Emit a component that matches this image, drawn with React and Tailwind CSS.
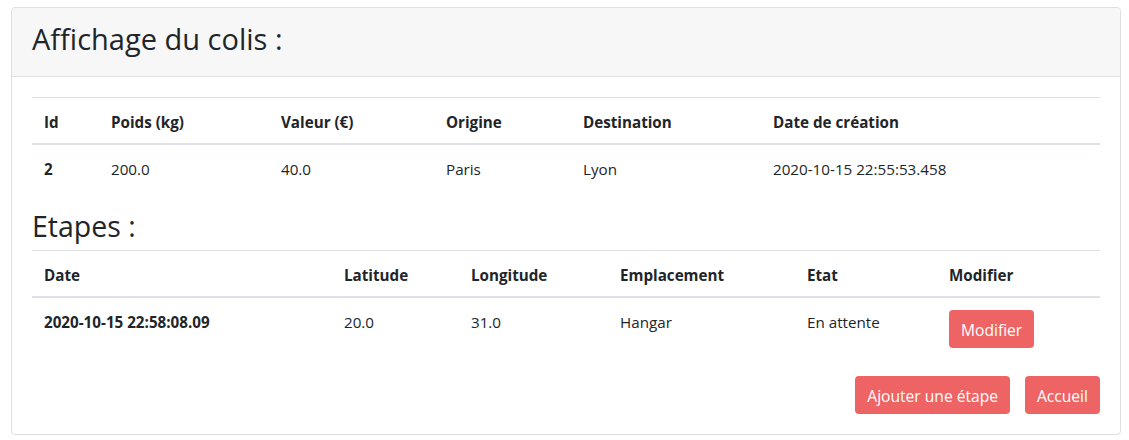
const colis = {
  id: "2",
  poids: "200.0",
  valeur: "40.0",
  origine: "Paris",
  destination: "Lyon",
  date: "2020-10-15 22:55:53.458",
};

const etapes = [
  {
    date: "2020-10-15 22:58:08.09",
    latitude: "20.0",
    longitude: "31.0",
    emplacement: "Hangar",
    etat: "En attente",
  },
];

const th = "px-3 pt-[14px] pb-[10px] text-left font-bold align-bottom border-b-2 border-[#dee2e6] leading-[21px]";
const td = "px-3 pt-[14px] pb-[10px] align-top leading-[21px]";
const btn = "bg-[#ee6464] text-white rounded-[4px] px-3 h-[38px] pt-[2px] leading-6 text-[15.6px]";

const App = () => {
  return (
    <div className="min-h-[440px] bg-white pl-[11px] pt-[7px] font-['Segoe_UI','Open_Sans',sans-serif] text-[15.2px] text-[#212529]">
      <div className="w-[1110px] border border-[#dfdfdf] rounded-[4px] overflow-hidden">
        {/* Header */}
        <div className="bg-[#f7f7f7] border-b border-[#dfdfdf] h-[69px] px-5 pb-[6px] flex items-center">
          <h3 className="text-[29px] leading-[34px] font-normal">Affichage du colis :</h3>
        </div>

        {/* Body */}
        <div className="px-5 pt-5 pb-5">
          <table className="w-full table-fixed border-collapse border-t border-[#dee2e6]">
            <thead>
              <tr>
                <th className={`${th} w-[67px]`}>Id</th>
                <th className={`${th} w-[170px]`}>Poids (kg)</th>
                <th className={`${th} w-[165px]`}>Valeur (€)</th>
                <th className={`${th} w-[137px]`}>Origine</th>
                <th className={`${th} w-[190px]`}>Destination</th>
                <th className={th}>Date de création</th>
              </tr>
            </thead>
            <tbody>
              <tr>
                <td className={`${td} font-bold`}>{colis.id}</td>
                <td className={td}>{colis.poids}</td>
                <td className={td}>{colis.valeur}</td>
                <td className={td}>{colis.origine}</td>
                <td className={td}>{colis.destination}</td>
                <td className={td}>{colis.date}</td>
              </tr>
            </tbody>
          </table>

          <h3 className="text-[28.5px] leading-[36px] font-normal mt-[18px] mb-[6px]">Etapes :</h3>

          <table className="w-full table-fixed border-collapse border-t border-[#dee2e6]">
            <thead>
              <tr>
                <th className={`${th} w-[300px]`}>Date</th>
                <th className={`${th} w-[127px]`}>Latitude</th>
                <th className={`${th} w-[149px]`}>Longitude</th>
                <th className={`${th} w-[187px]`}>Emplacement</th>
                <th className={`${th} w-[142px]`}>Etat</th>
                <th className={th}>Modifier</th>
              </tr>
            </thead>
            <tbody>
              {etapes.map((e, i) => (
                <tr key={i}>
                  <td className={`${td} font-bold`}>{e.date}</td>
                  <td className={td}>{e.latitude}</td>
                  <td className={td}>{e.longitude}</td>
                  <td className={td}>{e.emplacement}</td>
                  <td className={td}>{e.etat}</td>
                  <td className="px-3 pt-3 pb-3 align-top">
                    <button className={`${btn} block`}>Modifier</button>
                  </td>
                </tr>
              ))}
            </tbody>
          </table>

          <div className="flex justify-end gap-[15px] mt-4">
            <button className={btn}>Ajouter une étape</button>
            <button className={btn}>Accueil</button>
          </div>
        </div>
      </div>
    </div>
  );
};

export default App;
